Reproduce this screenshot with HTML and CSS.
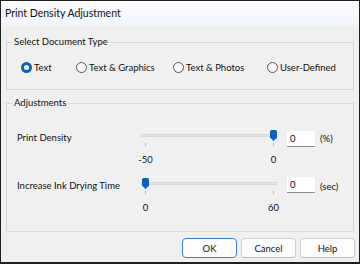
FILE: index.html
```html
<!DOCTYPE html>
<html lang="en">

<head>
    <meta charset="UTF-8">
    <meta name="viewport" content="width=device-width, initial-scale=1.0">
    <title>Print Density Adjustment</title>
    <link rel="stylesheet" href="styles.css">
</head>

<body>
    <div class="dialog">
        <div class="titlebar">Print Density Adjustment</div>

        <fieldset class="group doc-type">
            <legend>Select Document Type</legend>
            <div class="radios">
                <label class="radio checked"><span class="dot"></span>Text</label>
                <label class="radio"><span class="dot"></span>Text &amp; Graphics</label>
                <label class="radio"><span class="dot"></span>Text &amp; Photos</label>
                <label class="radio"><span class="dot"></span>User-Defined</label>
            </div>
        </fieldset>

        <fieldset class="group adjust">
            <legend>Adjustments</legend>

            <div class="adj-row">
                <div class="adj-label">Print Density</div>
                <div class="slider">
                    <div class="rail">
                        <div class="track"></div>
                        <svg class="thumb" style="left: 129px" width="7" height="11" viewBox="0 0 7 11">
                            <path d="M0 1.5 Q0 0 1.5 0 H5.5 Q7 0 7 1.5 V7.5 L3.5 11 L0 7.5 Z" fill="#0a64bd" />
                        </svg>
                    </div>
                    <div class="scale">
                        <div class="mark"><span>-50</span></div>
                        <div class="mark"><span>0</span></div>
                    </div>
                </div>
                <div class="field">0</div>
                <div class="unit">(%)</div>
            </div>

            <div class="adj-row second">
                <div class="adj-label">Increase Ink Drying Time</div>
                <div class="slider">
                    <div class="rail">
                        <div class="track"></div>
                        <svg class="thumb" style="left: 1px" width="7" height="11" viewBox="0 0 7 11">
                            <path d="M0 1.5 Q0 0 1.5 0 H5.5 Q7 0 7 1.5 V7.5 L3.5 11 L0 7.5 Z" fill="#0a64bd" />
                        </svg>
                    </div>
                    <div class="scale">
                        <div class="mark"><span>0</span></div>
                        <div class="mark"><span>60</span></div>
                    </div>
                </div>
                <div class="field">0</div>
                <div class="unit">(sec)</div>
            </div>
        </fieldset>

        <div class="buttons">
            <button class="btn default">OK</button>
            <button class="btn">Cancel</button>
            <button class="btn">Help</button>
        </div>
    </div>
</body>

</html>
```

FILE: styles.css
```css
* {
    margin: 0;
    padding: 0;
    box-sizing: border-box;
}

body {
    font-family: Lato, "Noto Sans", sans-serif;
    font-size: 9.5px;
    color: #111;
    background: #f0f0f0;
    white-space: nowrap;
}

.dialog {
    width: 360px;
    height: 264px;
    border: 1px solid #202020;
    border-bottom-width: 2px;
    background-color: #f0f0f0;
    display: flex;
    flex-direction: column;
}

.titlebar {
    height: 25px;
    line-height: 24px;
    padding-left: 4px;
    font-size: 10.5px;
    background: linear-gradient(#fbfcfe, #f1f5fb);
}

.group {
    border: 1px solid #d9d9d9;
    margin: 0 5px;
}

.group legend {
    margin-left: 5px;
    padding: 0 2px;
    line-height: 14px;
}

.doc-type {
    margin-top: 9px;
    padding: 11px 0 15px 0;
}

.radios {
    display: grid;
    grid-template-columns: 55px 97px 94px auto;
    align-items: center;
    height: 14px;
    padding-left: 14px;
}

.radio {
    display: flex;
    align-items: center;
}

.radio .dot {
    width: 11px;
    height: 11px;
    border-radius: 50%;
    border: 1px solid #555;
    background-color: #f9f9f9;
    margin-right: 2px;
}

.radio.checked .dot {
    border: 3.5px solid #0a64bd;
    background-color: #fff;
}

.adjust {
    margin-top: 6px;
    padding: 20px 0 16px 0;
}

.adj-row {
    display: grid;
    grid-template-columns: 124px 136px 28px auto;
    height: 37px;
    padding-left: 10px;
}

.adj-row.second {
    margin-top: 11px;
}

.adj-label {
    line-height: 16px;
}

.slider {
    display: flex;
    flex-direction: column;
}

.rail {
    position: relative;
    height: 11px;
}

.track {
    margin-top: 4px;
    height: 3px;
    background-color: #e3e3e3;
    border: 1px solid #d8d8d8;
}

.thumb {
    position: absolute;
    top: 0;
}

.scale {
    display: flex;
    justify-content: space-between;
    padding: 0 3px 0 4px;
    margin-top: 2px;
}

.mark {
    width: 1px;
    display: flex;
    flex-direction: column;
    align-items: center;
}

.mark::before {
    content: "";
    width: 1px;
    height: 3px;
    background-color: #b8b8b8;
}

.mark span {
    margin-top: 7px;
    line-height: 14px;
}

.field {
    margin-left: 10px;
    width: 28px;
    height: 16px;
    margin-top: 1px;
    background-color: #fff;
    border-bottom: 1px solid #8c8c8c;
    padding-left: 3px;
    line-height: 15px;
}

.adj-row.second .field {
    margin-top: -1px;
}

.unit {
    margin-left: 15px;
    line-height: 18px;
}

.buttons {
    display: flex;
    justify-content: flex-end;
    gap: 4px;
    margin: 6px 4px 0 0;
}

.btn {
    width: 55px;
    height: 20px;
    font-family: inherit;
    font-size: 9.5px;
    color: #111;
    background-color: #fdfdfd;
    border: 1px solid #d0d0d0;
    border-bottom-color: #bdbdbd;
    border-radius: 4px;
}

.btn.default {
    border-color: #3d82cf;
}
```
